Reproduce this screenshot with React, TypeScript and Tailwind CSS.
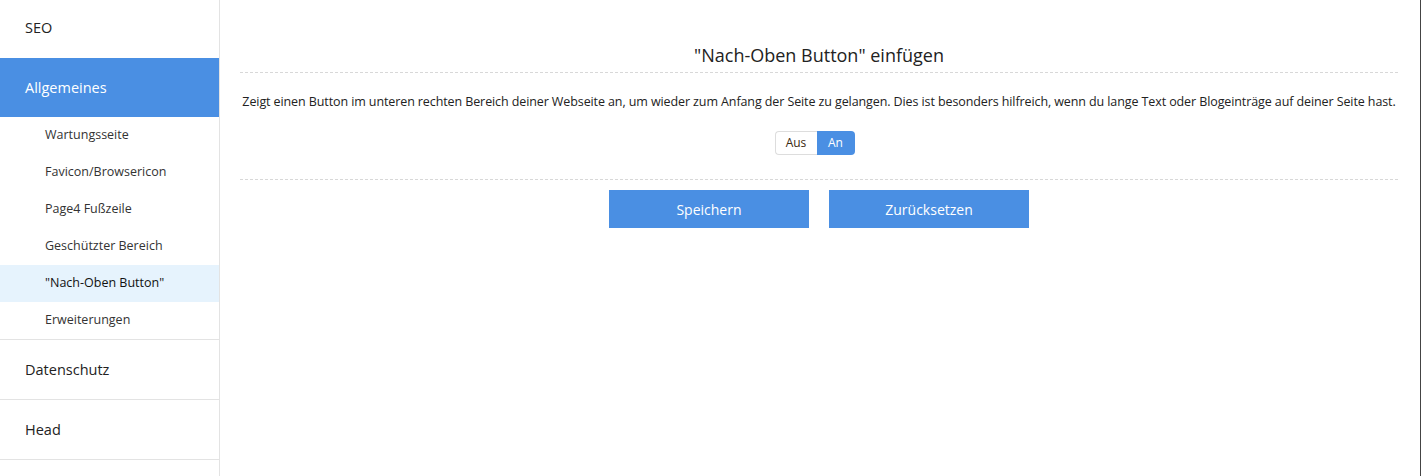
import React from "react";

const font = { fontFamily: '"Open Sans", "Noto Sans", sans-serif' };

function Side() {
  const subs = [
    "Wartungsseite",
    "Favicon/Browsericon",
    "Page4 Fußzeile",
    "Geschützter Bereich",
    '"Nach-Oben Button"',
    "Erweiterungen",
  ];
  return (
    <div className="w-[220px] shrink-0 border-r border-[#e3e3e3] h-[476px] bg-white">
      <div className="h-[58px] flex items-center pl-[25px] pb-[2px] text-[14.5px] text-[#222]">SEO</div>
      <div className="h-[59px] flex items-center pl-[25px] text-[14.5px] text-white bg-[#4a8fe3]">Allgemeines</div>
      <div className="border-b border-[#e3e3e3]">
        {subs.map((s, i) => (
          <div
            key={s}
            className={
              "h-[37px] flex items-center pl-[45px] text-[12.5px] " +
              (i === 4 ? "bg-[#e6f3fd] text-[#111]" : "text-[#333]")
            }
          >
            {s}
          </div>
        ))}
      </div>
      <div className="h-[60px] flex items-center pl-[25px] text-[14.5px] text-[#222] border-b border-[#e3e3e3]">Datenschutz</div>
      <div className="h-[60px] flex items-center pl-[25px] text-[14.5px] text-[#222] border-b border-[#e3e3e3]">Head</div>
    </div>
  );
}

export default function App() {
  return (
    <div className="flex w-[1421px] h-[476px] bg-white overflow-hidden" style={font}>
      <Side />
      <div className="flex-1 pl-[20px] pr-[22px] pt-[42px]">
        <h1 className="text-center text-[18px] text-[#222] leading-[26px] pb-[4px] border-b border-dashed border-[#d8d8d8]">
          "Nach-Oben Button" einfügen
        </h1>
        <p className="text-center text-[12.5px] text-[#222] mt-[20px] leading-[18px] tracking-[-0.1px]">
          Zeigt einen Button im unteren rechten Bereich deiner Webseite an, um wieder zum Anfang der Seite zu gelangen. Dies ist besonders hilfreich, wenn du lange Text oder Blogeinträge auf deiner Seite hast.
        </p>
        <div className="flex justify-center mt-[20px]">
          <div className="flex h-[24px] text-[12px] mr-[9px]">
            <div className="w-[42px] flex items-center justify-center border border-[#ddd] border-r-0 rounded-l-[4px] text-[#3a2a10] bg-white">Aus</div>
            <div className="w-[38px] flex items-center justify-center rounded-r-[4px] bg-[#4a8fe3] text-white">An</div>
          </div>
        </div>
        <div className="mt-[24px] border-b border-dashed border-[#d8d8d8]" />
        <div className="flex justify-center gap-[20px] mt-[10px]">
          <button className="w-[200px] h-[38px] bg-[#4a8fe3] text-white text-[14px]">Speichern</button>
          <button className="w-[200px] h-[38px] bg-[#4a8fe3] text-white text-[14px]">Zurücksetzen</button>
        </div>
      </div>
      <div className="w-px h-full bg-[#444]" />
    </div>
  );
}
